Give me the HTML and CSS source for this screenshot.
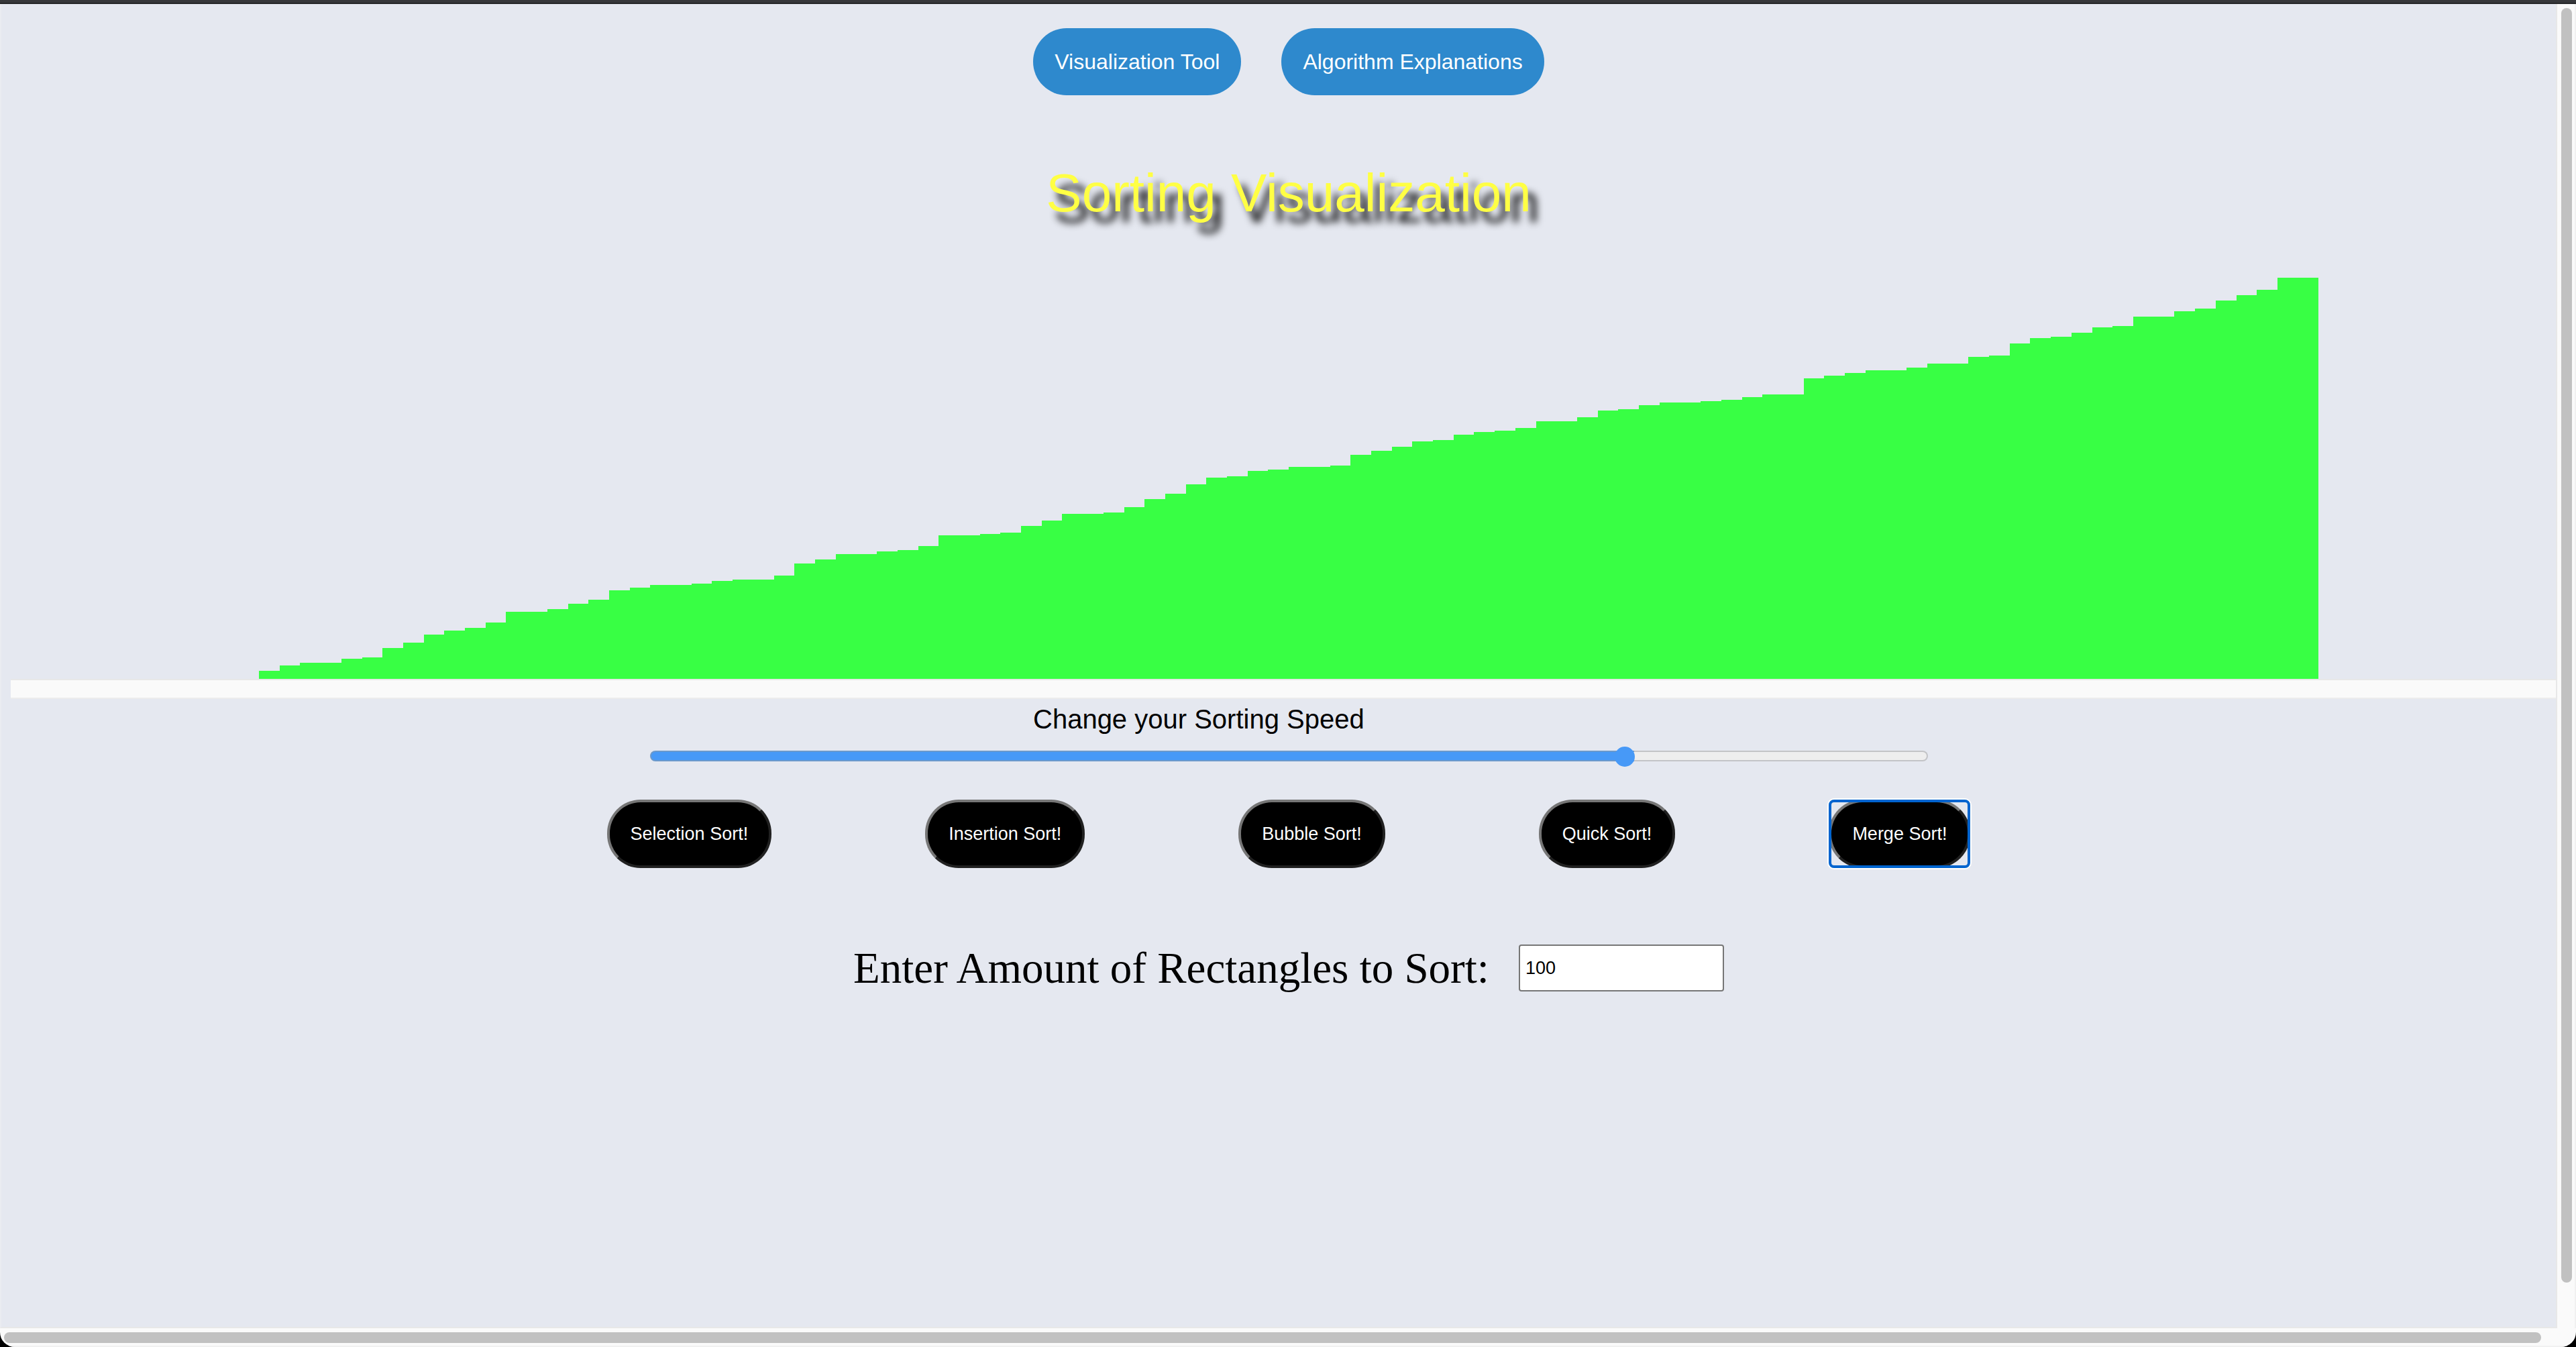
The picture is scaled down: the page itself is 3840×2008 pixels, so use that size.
FILE: index.html
```html
<!DOCTYPE html>
<html lang="en">
<head>
  <meta charset="utf-8">
  <meta name="viewport" content="width=device-width, initial-scale=1">
  <title>Sorting Visualization</title>
  <link rel="stylesheet" href="styles.css">
</head>
<body>
  <div class="window">
    <div class="window-edge"></div>
    <div class="window-body">
      <main class="viewport">
        <div class="page">
          <nav class="nav">
            <a class="nav-link" href="#tool">Visualization Tool</a>
            <a class="nav-link" href="#explanations">Algorithm Explanations</a>
          </nav>
          <h1 class="title">Sorting Visualization</h1>
          <div class="chart" id="chart"></div>
          <div class="chart-scroll"></div>
          <label class="speed-label" for="speed">Change your Sorting Speed</label>
          <input class="speed" id="speed" type="range" min="0" max="250" value="192">
          <div class="sorts">
            <button class="sort" type="button">Selection Sort!</button>
            <button class="sort" type="button">Insertion Sort!</button>
            <button class="sort" type="button">Bubble Sort!</button>
            <button class="sort" type="button">Quick Sort!</button>
            <button class="sort sort-active" type="button">Merge Sort!</button>
          </div>
          <div class="amount">
            <label class="amount-label" for="amount">Enter Amount of Rectangles to Sort:</label>
            <input class="amount-input" id="amount" type="text" value="100">
          </div>
        </div>
      </main>
      <div class="scroll-y"><div class="scroll-thumb"></div></div>
    </div>
    <div class="scroll-x"><div class="scroll-thumb"></div></div>
  </div>
  <script src="script.js"></script>
</body>
</html>
```
FILE: styles.css
```css
* {
  box-sizing: border-box;
}

body {
  margin: 0;
  background: #000;
  color: #000;
  font-family: "Liberation Sans", Arial, sans-serif;
}

.window {
  display: flex;
  flex-direction: column;
  min-height: 100vh;
  border-radius: 0 0 22px 22px;
  background: #fafafa;
  overflow: hidden;
}

.window-edge {
  height: 6px;
  background: #36373a;
  border-bottom: 2px solid #262729;
}

.window-body {
  display: flex;
  flex: 1;
}

.viewport {
  flex: 1;
  min-width: 0;
  overflow: hidden;
  background: #e5e8f0;
  border-left: 2px solid #eaecf1;
  border-right: 2px solid #e8e8e8;
  border-bottom: 2px solid #e8e8e8;
}

/* The page is shifted by its own left margin and runs past the viewport. */
.page {
  display: flex;
  flex-direction: column;
  width: calc(100% + 2px);
  margin-left: 14px;
  padding-top: 36px;
}

.nav {
  display: flex;
  justify-content: center;
  gap: 60px;
}

.nav-link {
  padding: 0 32px;
  border-radius: 50px;
  background: #2e89cd;
  color: #fff;
  font-size: 32px;
  line-height: 100px;
  text-decoration: none;
}

.title {
  margin: 100px 0 80px;
  color: #ffff44;
  font-size: 80px;
  font-weight: 400;
  line-height: 92px;
  text-align: center;
  text-shadow: 12px 16px 12px #000;
}

.chart {
  display: flex;
  align-items: flex-end;
  height: 598px;
  padding: 0 370px;
}

.bar {
  flex: 1;
  background: #38ff44;
}

.chart-scroll {
  height: 30px;
  border-top: 2px solid #e8e8e8;
  border-bottom: 2px solid #ececec;
  background: #fafafa;
}

.speed-label {
  margin: 7px 0 17px 40%;
  font-size: 40px;
  line-height: 46px;
}

.speed {
  appearance: none;
  align-self: center;
  width: 50%;
  height: 30px;
  margin: 0;
  background: none;
}

.speed::-webkit-slider-runnable-track {
  height: 16px;
  border: 2px solid transparent;
  border-radius: 8px;
  background:
    linear-gradient(90deg, #4799f7 77%, #eeeeee 77%) padding-box,
    linear-gradient(90deg, #6b99cb 77%, #c3c4c7 77%) border-box;
}

.speed::-webkit-slider-thumb {
  appearance: none;
  width: 30px;
  height: 30px;
  margin-top: -8px;
  border-radius: 50%;
  background: #4799f7;
}

.sorts {
  display: flex;
  justify-content: center;
  gap: 229px;
  margin-top: 50px;
}

.sort {
  height: 102px;
  padding: 0 31px;
  border: 4px solid;
  border-color: #767676 #212121 #212121 #767676;
  border-radius: 50px;
  background: #000;
  color: #fff;
  font-family: inherit;
  font-size: 27px;
}

/* Square focus ring over the round button. */
.sort-active {
  position: relative;
}

.sort-active::after {
  content: "";
  position: absolute;
  inset: -4px;
  border: 4px solid #0064cf;
  border-radius: 8px;
  box-shadow: 0 0 0 2px #fff;
}

.amount {
  display: flex;
  justify-content: center;
  align-items: center;
  gap: 44px;
  margin-top: 114px;
}

.amount-label {
  font-family: Georgia, "Liberation Serif", serif;
  font-size: 65px;
  line-height: 70px;
}

.amount-input {
  width: 306px;
  height: 70px;
  padding: 0 8px;
  border: 2px solid #767676;
  border-radius: 4px;
  background: #fff;
  color: #000;
  font-family: inherit;
  font-size: 27px;
}

.scroll-y {
  display: flex;
  width: 28px;
  padding: 6px 4px 68px 6px;
  border-right: 2px solid #f0f0f0;
}

.scroll-x {
  display: flex;
  height: 28px;
  padding: 6px 52px 4px 6px;
  border-bottom: 2px solid #f0f0f0;
}

.scroll-thumb {
  flex: 1;
  border-radius: 8px;
  background: #c1c1c1;
}
```
FILE: script.js
```js
const heights = [
  12, 20, 24, 24, 30, 32, 46, 54, 66, 72,
  76, 84, 100, 100, 104, 112, 118, 132, 136, 140,
  140, 142, 146, 148, 148, 154, 172, 178, 186, 186,
  190, 192, 198, 214, 214, 216, 218, 228, 236, 246,
  246, 248, 256, 268, 276, 290, 300, 302, 310, 312,
  316, 316, 318, 334, 340, 346, 354, 356, 364, 368,
  370, 374, 384, 384, 390, 400, 402, 408, 412, 412,
  414, 416, 420, 424, 424, 448, 452, 456, 460, 460,
  464, 470, 470, 480, 482, 500, 508, 510, 516, 524,
  526, 540, 540, 548, 552, 564, 572, 580, 598, 598,
];

const chart = document.getElementById("chart");
for (const height of heights) {
  const bar = document.createElement("div");
  bar.className = "bar";
  bar.style.height = `${height}px`;
  chart.append(bar);
}
```
